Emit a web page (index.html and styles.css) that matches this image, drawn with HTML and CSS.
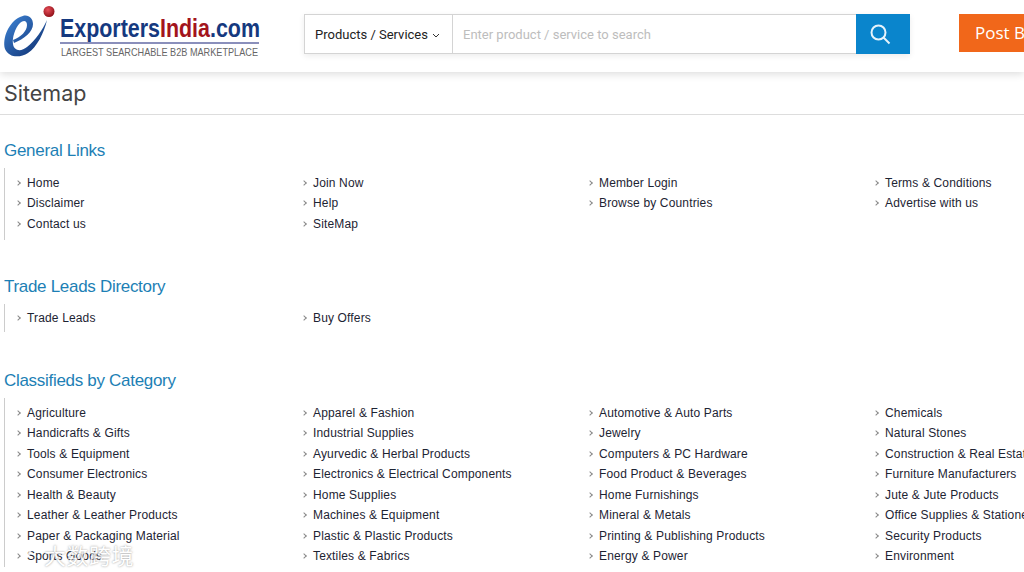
FILE: index.html
```html
<!DOCTYPE html>
<html lang="en">
<head>
    <meta charset="UTF-8">
    <meta name="viewport" content="width=device-width, initial-scale=1.0">
    <title>Sitemap</title>
    <link rel="stylesheet" href="styles.css">
</head>
<body>
    <header class="top-bar">
        <svg class="logo" width="264" height="62" viewBox="0 0 264 62">
            <defs>
                <radialGradient id="ball" cx="40%" cy="35%" r="70%">
                    <stop offset="0" stop-color="#e8505a"/>
                    <stop offset="1" stop-color="#8c0d15"/>
                </radialGradient>
                <linearGradient id="swoosh" x1="0" y1="0" x2="1" y2="1">
                    <stop offset="0" stop-color="#3f86d8"/>
                    <stop offset="1" stop-color="#0c2a6a"/>
                </linearGradient>
            </defs>
            <path fill="url(#swoosh)" d="M47 20 C44 33 37 47 28 53 C20 58 9 58 5 49 C2 38 9 22 20 17 C27 13 33 17 33 24 C33 32 24 39 14 43 L13 40 C21 37 27 31 27 25 C27 20 23 20 20 23 C15 28 12 38 13 44 C14 51 21 52 27 47 C35 41 43 29 47 20 Z"/>
            <circle cx="49" cy="11.5" r="5.5" fill="url(#ball)"/>
            <text class="logo-name" x="60" y="37" textLength="200" lengthAdjust="spacingAndGlyphs"><tspan fill="#15397f">Exporters</tspan><tspan fill="#a3141c">India</tspan><tspan fill="#15397f">.com</tspan></text>
            <rect x="60" y="42" width="199" height="2" fill="#8a8fbb"/>
            <text class="logo-tag" x="61" y="56" textLength="197" lengthAdjust="spacingAndGlyphs">LARGEST SEARCHABLE B2B MARKETPLACE</text>
        </svg>

        <form class="search-box">
            <div class="search-type">Products / Services
                <svg width="8" height="5" viewBox="0 0 8 5"><path d="M1 1l3 3 3-3" fill="none" stroke="#333" stroke-width="1"/></svg>
            </div>
            <div class="search-input">Enter product / service to search</div>
            <div class="search-btn">
                <svg width="22" height="22" viewBox="0 0 22 22" fill="none" stroke="#e6f3fb" stroke-width="2"><circle cx="9.5" cy="9.5" r="7"/><path d="M14.5 14.5l6 6"/></svg>
            </div>
        </form>

        <a class="post-btn">Post Buy Requirement</a>
    </header>

    <h1 class="page-title">Sitemap</h1>

    <section class="map-section general">
        <h2>General Links</h2>
        <ul class="link-list">
            <li>Home</li>
            <li>Join Now</li>
            <li>Member Login</li>
            <li>Terms &amp; Conditions</li>
            <li>Disclaimer</li>
            <li>Help</li>
            <li>Browse by Countries</li>
            <li>Advertise with us</li>
            <li>Contact us</li>
            <li>SiteMap</li>
        </ul>
    </section>

    <section class="map-section trade">
        <h2>Trade Leads Directory</h2>
        <ul class="link-list">
            <li>Trade Leads</li>
            <li>Buy Offers</li>
        </ul>
    </section>

    <section class="map-section classifieds">
        <h2>Classifieds by Category</h2>
        <ul class="link-list">
            <li>Agriculture</li>
            <li>Apparel &amp; Fashion</li>
            <li>Automotive &amp; Auto Parts</li>
            <li>Chemicals</li>
            <li>Handicrafts &amp; Gifts</li>
            <li>Industrial Supplies</li>
            <li>Jewelry</li>
            <li>Natural Stones</li>
            <li>Tools &amp; Equipment</li>
            <li>Ayurvedic &amp; Herbal Products</li>
            <li>Computers &amp; PC Hardware</li>
            <li>Construction &amp; Real Estate</li>
            <li>Consumer Electronics</li>
            <li>Electronics &amp; Electrical Components</li>
            <li>Food Product &amp; Beverages</li>
            <li>Furniture Manufacturers</li>
            <li>Health &amp; Beauty</li>
            <li>Home Supplies</li>
            <li>Home Furnishings</li>
            <li>Jute &amp; Jute Products</li>
            <li>Leather &amp; Leather Products</li>
            <li>Machines &amp; Equipment</li>
            <li>Mineral &amp; Metals</li>
            <li>Office Supplies &amp; Stationery</li>
            <li>Paper &amp; Packaging Material</li>
            <li>Plastic &amp; Plastic Products</li>
            <li>Printing &amp; Publishing Products</li>
            <li>Security Products</li>
            <li>Sports Goods</li>
            <li>Textiles &amp; Fabrics</li>
            <li>Energy &amp; Power</li>
            <li>Environment</li>
        </ul>
    </section>

    <div class="watermark">
        <svg width="26" height="24" viewBox="0 0 26 24" fill="none" stroke="#fff" stroke-width="3"><path d="M3 2v13c0 5 5 7 10 6"/><circle cx="17" cy="9" r="5"/></svg>
        <span>大数跨境</span>
    </div>
</body>
</html>
```

FILE: styles.css
```css
html, body {
    width: 1024px;
    height: 572px;
    overflow: hidden;
}
body {
    margin: 0;
    background: #fff;
    font-family: "Liberation Sans", Arial, sans-serif;
    color: #1d2433;
    position: relative;
}

.top-bar {
    height: 72px;
    display: flex;
    align-items: flex-start;
    box-shadow: 0 2px 8px rgba(0, 0, 0, 0.14);
    white-space: nowrap;
}
.logo {
    flex: none;
}
.logo-name {
    font: bold 26px "Liberation Sans", Arial, sans-serif;
}
.logo-tag {
    font: 11px "Liberation Sans", Arial, sans-serif;
    fill: #666;
}

.search-box {
    flex: none;
    width: 606px;
    height: 40px;
    margin: 14px 0 0 40px;
    display: flex;
    box-sizing: border-box;
    border: 1px solid #d4d4d4;
    border-right: none;
    box-shadow: 0 2px 6px rgba(0, 0, 0, 0.08);
    font-family: Roboto, sans-serif;
    font-size: 13px;
}
.search-type {
    width: 148px;
    box-sizing: border-box;
    padding-left: 10px;
    border-right: 1px solid #d4d4d4;
    line-height: 39px;
    color: #222;
}
.search-type svg {
    margin-left: 1px;
    vertical-align: 1px;
}
.search-input {
    flex: 1;
    padding-left: 10px;
    line-height: 39px;
    color: #bdbdbd;
}
.search-btn {
    width: 54px;
    margin: -1px 0;
    box-sizing: border-box;
    padding-right: 6px;
    background: #0a85cc;
    display: flex;
    align-items: center;
    justify-content: center;
}
.post-btn {
    flex: none;
    margin: 14px 0 0 49px;
    height: 38px;
    padding: 0 16px;
    background: #f1671a;
    color: #fff;
    font-family: "Open Sans", sans-serif;
    font-size: 17px;
    line-height: 38px;
}

.page-title {
    margin: 0;
    height: 42px;
    padding-left: 4px;
    border-bottom: 1px solid #ddd;
    font-family: Inter, sans-serif;
    font-size: 21.5px;
    font-weight: 400;
    line-height: 42px;
    color: #444;
}

.map-section h2 {
    margin: 0 0 7px 4px;
    font-size: 17px;
    font-weight: 400;
    letter-spacing: -0.3px;
    line-height: 20px;
    color: #1d7fb5;
}
.general {
    padding-top: 26px;
}
.trade {
    padding-top: 37px;
}
.classifieds {
    padding-top: 39px;
}

.link-list {
    list-style: none;
    margin: 0 0 0 4px;
    width: 1150px;
    border-left: 1px solid #ccc;
    padding-left: 11px;
    display: grid;
    grid-template-columns: repeat(4, 286px);
    grid-auto-rows: 20.5px;
    font-size: 12px;
    letter-spacing: 0.15px;
    line-height: 20px;
}
.general .link-list {
    padding-top: 4.6px;
    padding-bottom: 5.9px;
}
.trade .link-list {
    padding-top: 4px;
    padding-bottom: 3.5px;
}
.classifieds .link-list {
    padding-top: 4.6px;
}
.link-list li {
    padding-left: 11px;
    position: relative;
    white-space: nowrap;
}
.link-list li::before {
    content: "";
    position: absolute;
    left: 0;
    top: 8px;
    width: 3px;
    height: 3px;
    border-top: 1px solid #888;
    border-right: 1px solid #888;
    transform: rotate(45deg);
}

.watermark {
    position: absolute;
    left: 8px;
    top: 542px;
    display: flex;
    align-items: center;
    gap: 10px;
    opacity: 0.8;
    color: #fff;
    font-family: "Noto Sans CJK SC", sans-serif;
    font-size: 22px;
    letter-spacing: 0.5px;
    line-height: 24px;
    text-shadow: 0 0 2px #777;
}
```
